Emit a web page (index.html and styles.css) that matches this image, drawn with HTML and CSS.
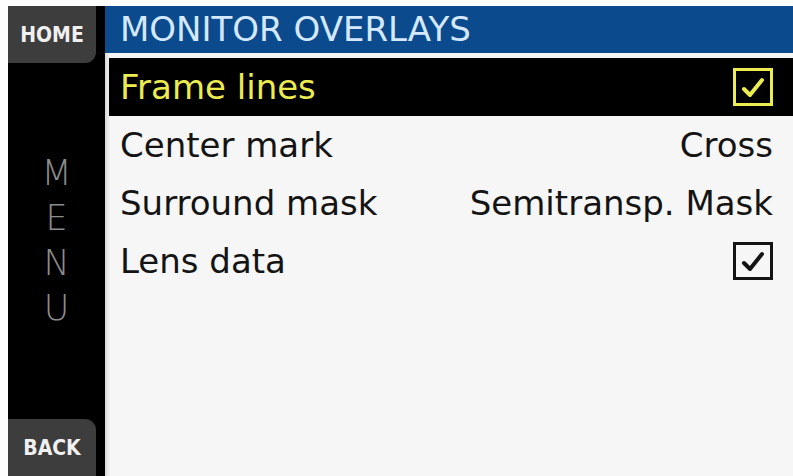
FILE: index.html
```html
<!DOCTYPE html>
<html>
<head>
<meta charset="utf-8">
<link rel="stylesheet" href="styles.css">
</head>
<body>
<div class="screen">
  <aside class="sidebar">
    <div class="btn btn-home">HOME</div>
    <div class="menu-word">
      <span>M</span><span>E</span><span>N</span><span>U</span>
    </div>
    <div class="btn btn-back">BACK</div>
  </aside>
  <main class="main">
    <header class="title">MONITOR OVERLAYS</header>
    <div class="list">
      <div class="row selected">
        <span class="label">Frame lines</span>
        <span class="check">
          <svg viewBox="0 0 40 38" width="40" height="38"><rect x="1.5" y="1.5" width="37" height="35" fill="none" stroke="currentColor" stroke-width="3"/><path d="M11 21 L17 27 L29 12" fill="none" stroke="currentColor" stroke-width="4" stroke-linecap="round" stroke-linejoin="round"/></svg>
        </span>
      </div>
      <div class="row">
        <span class="label">Center mark</span>
        <span class="value">Cross</span>
      </div>
      <div class="row">
        <span class="label">Surround mask</span>
        <span class="value">Semitransp. Mask</span>
      </div>
      <div class="row">
        <span class="label">Lens data</span>
        <span class="check">
          <svg viewBox="0 0 40 38" width="40" height="38"><rect x="1.5" y="1.5" width="37" height="35" fill="none" stroke="currentColor" stroke-width="3"/><path d="M11 21 L17 27 L29 12" fill="none" stroke="currentColor" stroke-width="4" stroke-linecap="round" stroke-linejoin="round"/></svg>
        </span>
      </div>
    </div>
  </main>
</div>
</body>
</html>
```
FILE: styles.css
```css
html, body {
  margin: 0;
  padding: 0;
  background: #fdfdfd;
}
.screen {
  display: flex;
  width: 793px;
  height: 476px;
  padding: 6px 0 0 8px;
  box-sizing: border-box;
  font-family: "DejaVu Sans", sans-serif;
}
.sidebar {
  width: 97px;
  flex: none;
  background: #000;
  display: flex;
  flex-direction: column;
  justify-content: space-between;
}
.btn {
  width: 88px;
  height: 57px;
  background: #3d3d3d;
  color: #f0f0f0;
  font-family: "DejaVu Sans Condensed", sans-serif;
  font-weight: bold;
  font-size: 21px;
  display: flex;
  align-items: center;
  justify-content: center;
}
.btn-home {
  border-bottom-right-radius: 11px;
}
.btn-back {
  border-top-right-radius: 11px;
}
.menu-word {
  display: flex;
  flex-direction: column;
  align-items: center;
  color: #8c8c8c;
  font-size: 35px;
  line-height: 45px;
  font-weight: 200;
}
.main {
  flex: 1;
  background: #f6f6f6;
  display: flex;
  flex-direction: column;
}
.title {
  height: 47px;
  background: #0b4a8c;
  color: #d4e9ff;
  font-size: 34px;
  line-height: 47px;
  padding-left: 15px;
}
.list {
  flex: 1;
  padding-top: 5px;
  padding-left: 4px;
  background: linear-gradient(to right, #d8d8d8 0, #f6f6f6 5px);
}
.row {
  height: 58px;
  display: flex;
  align-items: center;
  justify-content: space-between;
  padding: 0 20px 0 11px;
  font-size: 34px;
  color: #141414;
}
.row.selected {
  background: #000;
  color: #ecec50;
}
.check {
  display: flex;
}
```
